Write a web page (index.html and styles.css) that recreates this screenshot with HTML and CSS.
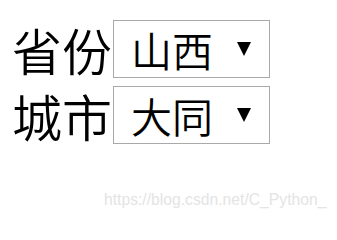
FILE: index.html
```html
<!DOCTYPE html>
<html lang="zh-CN">
<head>
<meta charset="utf-8">
<link rel="stylesheet" href="styles.css">
</head>
<body>
<div class="form">
  <div class="row">
    <span class="label">省份</span>
    <div class="picker">
      <span class="value">山西</span>
      <span class="arrow"></span>
    </div>
  </div>
  <div class="row">
    <span class="label">城市</span>
    <div class="picker">
      <span class="value">大同</span>
      <span class="arrow"></span>
    </div>
  </div>
</div>
<div class="watermark">https://blog.csdn.net/C_Python_</div>
</body>
</html>
```
FILE: styles.css
```css
html, body {
  margin: 0;
  padding: 0;
  background: #ffffff;
}
body {
  width: 337px;
  height: 225px;
  overflow: hidden;
  font-family: "Noto Sans CJK SC", "Noto Sans", sans-serif;
  color: #000;
}
.form {
  display: flex;
  flex-direction: column;
  gap: 8px;
  padding: 20px 0 0 12px;
}
.row {
  display: flex;
  align-items: center;
  height: 58px;
}
.label {
  font-size: 50px;
  font-weight: 350;
  line-height: 58px;
  width: 101px;
  white-space: nowrap;
}
.picker {
  box-sizing: border-box;
  width: 157px;
  height: 58px;
  border: 1px solid #a9a9a9;
  background: #fff;
  display: flex;
  align-items: center;
  padding: 0 18px 0 17px;
}
.value {
  font-size: 41px;
  font-weight: 350;
  line-height: 56px;
  flex: 1;
}
.arrow {
  width: 0;
  height: 0;
  border-left: 7px solid transparent;
  border-right: 7px solid transparent;
  border-top: 14px solid #000;
  margin-top: 0;
}
.watermark {
  margin: 46px 0 0 104px;
  font-family: "Liberation Sans", Arial, sans-serif;
  font-size: 15.7px;
  color: #e4e4e4;
  line-height: 20px;
}
```
